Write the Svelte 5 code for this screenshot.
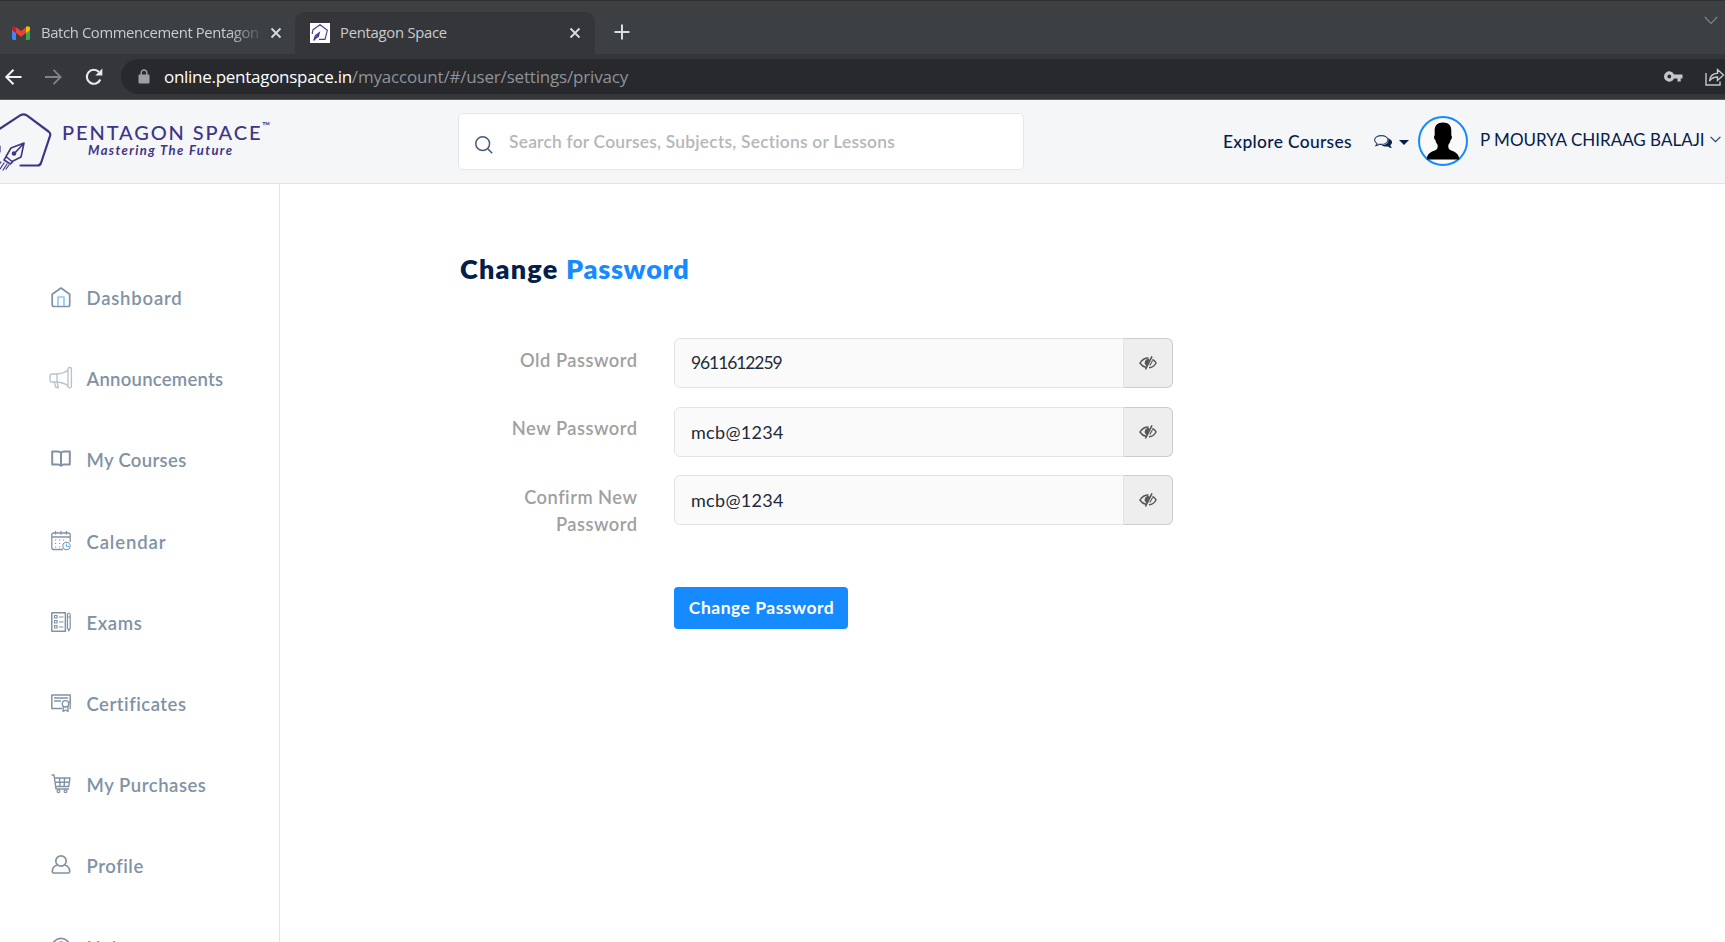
<script>
  const items = [
    ['home', 'Dashboard', 0.8], ['horn', 'Announcements', 0.26], ['book', 'My Courses', 0.33], ['cal', 'Calendar', 0.89],
    ['exam', 'Exams', 0.63], ['cert', 'Certificates', 0.51], ['cart', 'My Purchases', 0.53], ['user', 'Profile', 0.55], ['help', 'Help', 0.8]
  ];
  const fields = [
    { label: 'Old Password', value: '9611612259', digits: true },
    { label: 'New Password', value: 'mcb@1234' },
    { label: 'Confirm New Password', value: 'mcb@1234' }
  ];
</script>

<div class="screen">
  <div class="tabs">
    <div class="tab one">
      <svg class="gm" width="18" height="14" viewBox="0 0 18 14"><path d="M0 2v10.6Q0 14 1.4 14H4V4z" fill="#4285f4"/><path d="M14 4v10h2.600Q18 14 18 12.600V2z" fill="#34a853"/><path d="M14 1l0 6 4-3V2Q17.500-.8 14.500 .600z" fill="#fbbc04"/><path d="M4 1.200v5.800l5 3.700 5-3.700V1.200L9 5z" fill="#ea4335"/><path d="M0 2v2.200l4 3V1.200Q.6-1.200 0 2z" fill="#c5221f"/></svg>
      <span class="tt fade">Batch Commencement Pentagon</span>
      <svg class="x" width="12" height="12" viewBox="0 0 12 12"><path d="M1.500 1.500l9 9M10.500 1.500l-9 9"/></svg>
    </div>
    <div class="tab two">
      <span class="fav"><svg width="20" height="20" viewBox="0 0 60 60" fill="none" stroke="#4a3d96" stroke-width="3.500"><path d="M7 28L9 20 30 5 52 22 45 49H27M7 28v5M11 52l5-14 12-9-3 12-8 5-6 7M14 49l12-17"/></svg></span>
      <span class="tt">Pentagon Space</span>
      <svg class="x" width="12" height="12" viewBox="0 0 12 12"><path d="M1.500 1.500l9 9M10.500 1.500l-9 9"/></svg>
    </div>
    <svg class="plus" width="16" height="16" viewBox="0 0 16 16"><path d="M8 .5v15M.5 8h15"/></svg>
    <svg class="down" width="14" height="9" viewBox="0 0 14 9"><path d="M.8 .8L7 7.500 13.200 .8"/></svg>
  </div>
  <div class="bar">
    <svg class="back" width="17" height="16" viewBox="0 0 17 16"><path d="M16.500 8H1.500M8.500 .8L1.300 8l7.200 7.200"/></svg>
    <svg class="fwd" width="17" height="16" viewBox="0 0 17 16"><path d="M0 8h15.500M8.500 .8L15.700 8l-7.200 7.200"/></svg>
    <svg class="rel" width="18" height="18" viewBox="0 0 18 18"><path d="M15.300 11.500A7 7 0 1 1 14 4" fill="none" stroke="#e8eaed" stroke-width="2.100"/><path d="M17.300 .6v7h-7z" fill="#e8eaed"/></svg>
    <div class="omni">
      <svg class="lock" width="12" height="15" viewBox="0 0 12 15"><rect x=".5" y="5.500" width="11" height="9" rx="1" fill="#9aa0a6"/><path d="M3.200 6V3.800a2.800 2.800 0 0 1 5.600 0V6" fill="none" stroke="#9aa0a6" stroke-width="1.400"/></svg>
      <span class="url"><b>online.pentagonspace.in</b><span>/myaccount/#/user/settings/privacy</span></span>
      <svg class="key" width="19" height="11" viewBox="0 0 19 11"><path fill="#c4c7c9" fill-rule="evenodd" d="M10 3.500A5.200 5.200 0 1 0 10 7.500h3.500V10.500h3.200V7.500H18.500V3.500zM5.300 3.600a1.900 1.900 0 1 1 0 3.800 1.900 1.900 0 0 1 0-3.800z"/></svg>
      <svg class="share" width="20" height="18" viewBox="0 0 20 18" fill="none" stroke="#c4c7c9" stroke-width="1.400"><path d="M1 5v12h14v-3.500"/><path d="M4.500 13c.5-5 3.500-7.500 8-7.700V1.500l6 5.500-6 5.500V9c-3.500 0-6 1-8 4z"/></svg>
    </div>
  </div>

  <header>
    <svg class="mark" width="52" height="58" viewBox="0 0 52 58" fill="none" stroke="#3f3585" stroke-width="2.200" stroke-linecap="round" stroke-linejoin="round"><path d="M-2 17L20.500 2.200Q23.500 .5 26.500 2.200L48.500 18.500Q51 20.500 50 23L41 50Q40 52.500 37.500 52.500H20.500"/><path stroke-width="1.600" d="M24 30L11 35 6 43.500 12 48.500 21 44zM24 30L14 41M6 44l-2 3 6.500 4 2-2"/><circle cx="14" cy="40.500" r="1.200"/><path stroke-width="1.200" d="M1 49l-3 4M4 50l-4 6M7 51l-4 6M9 52l-3 4M0 33v6"/></svg>
    <div class="brand"><div class="b1"><span>PENTAGON SPACE</span><sup>™</sup></div><div class="b2">Mastering The Future</div></div>
    <div class="search">
      <svg width="18" height="18" viewBox="0 0 18 18" fill="none" stroke="#42597a" stroke-width="1.500"><circle cx="7.700" cy="7.700" r="6.900"/><path d="M12.700 12.700l4.500 4.500"/></svg>
      <span class="ph">Search for Courses, Subjects, Sections or Lessons</span>
    </div>
    <span class="exp">Explore Courses</span>
    <svg class="chat" width="19" height="14" viewBox="0 0 19 14"><path d="M14 3.300c4.500 1.700 5.200 4.700 2.400 7 .1 1 .7 1.700 1.600 2.600-1.700.2-3-.6-4-1.400-2.600.4-5-.2-6.500-1.500 5 .3 8-2.400 6.500-6.700z" fill="#0b2447"/><path d="M7.300 .6c3.800 0 6.700 2 6.700 4.400s-2.900 4.400-6.700 4.400c-.7 0-1.400 0-2-.2-1 .8-2.100 1.300-3.400 1.400.6-.7 1-1.400 1.100-2.100C1.500 7.700.6 6.400.6 5 .6 2.600 3.500.6 7.300 .6z" fill="#f4f6f8" stroke="#2a4162" stroke-width="1.100"/></svg>
    <svg class="caret" width="10" height="5" viewBox="0 0 10 5"><path d="M0 0h10L5 5z" fill="#04204a"/></svg>
    <svg class="ava" width="50" height="50" viewBox="0 0 50 50"><circle cx="25" cy="25" r="24" fill="#fafafa" stroke="#168bff" stroke-width="2"/><path d="M25 6.500c5.500 0 8.700 3 8.300 9v4c1 .2.900 3.500-.7 4.500-.5 2.500-1.400 3.800-2.300 5 0 3 .2 4 2 5 4 2 8.500 2.500 9 9.500H8.700c.5-7 5-7.500 9-9.500 1.800-1 2-2 2-5-.9-1.200-1.800-2.500-2.300-5-1.600-1-1.700-4.300-.7-4.500v-4c-.4-6 2.800-9 8.300-9z"/></svg>
    <span class="name">P MOURYA CHIRAAG BALAJI</span>
    <svg class="chev" width="11" height="7" viewBox="0 0 11 7"><path d="M.6 .8l4.900 4.900L10.400 .8" fill="none" stroke="#2c4464" stroke-width="1.200"/></svg>
  </header>

  <div class="body">
    <aside>
      {#each items as [ic, label, ls]}
        <div class="item">
          <svg width="24" height="22" viewBox="0 0 24 22" fill="none" stroke="#8192a6" stroke-width="1.700" stroke-linejoin="round">
            {#if ic === 'home'}<path d="M3.200 8.200L12 2l8.700 6.200v10.600q0 1.700-1.700 1.700H4.900q-1.700 0-1.700-1.700z"/><path d="M9 20v-9h6v9" stroke="#8cc8ff"/>
            {:else if ic === 'horn'}<g stroke="#b9c1cb" stroke-width="1.300"><path d="M3 7h5v8H3Q1 15 1 13V9q0-2 2-2zM8 7q7-.5 11-4v16q-4-3.500-11-4M19 1.500q0-1 1.700-1t1.700 1v18.300q0 1-1.700 1t-1.700-1zM5 15l2 5.500h2.500L8 15"/></g>
            {:else if ic === 'book'}<path stroke-width="2" d="M12 5q-1-1.500-3-1.500H3.200v13H9q2 0 3 1.300 1-1.300 3-1.300h5.800v-13H15q-2 0-3 1.500zM12 5v12"/>
            {:else if ic === 'cal'}<path stroke-width="1.300" d="M14 19.500H4.600q-1.800 0-1.800-1.700V4.500Q2.800 3 4.600 3h14.800Q21.200 3 21.200 4.500V12M3 7h18M6.500 1v3.500M12 1v3.500M17.500 1v3.500"/><path stroke-dasharray="1.200 2.800" stroke-width="1.200" d="M6 10h12M6 13.500h9M6 17h7"/><circle cx="17.500" cy="16" r="3.700" stroke-width="1.100"/><path stroke="#6bb5ff" stroke-width="1" d="M17.500 13.500V16.500h2.500"/>
            {:else if ic === 'exam'}<path stroke-width="1.500" d="M2.800 1.700h13.600v18.600H2.800z"/><path stroke-width="1.200" d="M5.500 4.500h2.500v2.500H5.500zM5.500 9.500h2.500v2.500H5.500zM5.500 14.500h2.500v2.500H5.500zM10 6h4.500M10 11h4.500M10 16h4.500M18.500 4q0-2 1.300-2t1.400 2v13l-1.400 3-1.300-3zM18.500 6h2.700"/>
            {:else if ic === 'cert'}<path stroke-width="1.500" d="M13 16.500H2.800V3h18.400v8"/><path stroke-width="1.300" d="M5 6h14M5 9h7M21.200 8v9"/><circle cx="16.500" cy="11.800" r="3.200" stroke-width="1.400"/><path stroke-width="1.400" d="M14.200 14.500v5l2.300-1.500 2.500 1.500v-5"/>
            {:else if ic === 'cart'}<path stroke-width="1.400" d="M2.500 2H5l2 14h13M5.500 5H21l-1.300 8.500H6.700M6 9.200h14.500M10.500 5l.5 8.500M15.500 5l-.3 8.500"/><circle cx="9.500" cy="18.300" r="1.400" stroke-width="1.200"/><circle cx="16.500" cy="18.300" r="1.400" stroke-width="1.200"/>
            {:else if ic === 'user'}<circle cx="12" cy="7" r="5.200"/><path d="M8.300 11Q3.300 12.500 3.300 17.500 3.300 19 4.800 19h14.400q1.500 0 1.500-1.500 0-5-5-6.500"/>
            {:else}<circle cx="12" cy="11" r="8.700"/><path d="M9 9q0-3 3-3t3 3-3 4"/>{/if}
          </svg>
          <span class="lbl" style="letter-spacing: {ls}px">{label}</span>
        </div>
      {/each}
    </aside>
    <main>
      <h1><span class="dark">Change</span><span class="blue">Password</span></h1>
      <div class="form">
        {#each fields as f}
          <div class="row">
            <div class="label">{f.label}</div>
            <div class="field">
              <div class="in" class:digits={f.digits}>{f.value}</div>
              <div class="eye"><svg width="18" height="14" viewBox="0 0 18 14" fill="none" stroke="#555" stroke-width="1.400"><path d="M7 11.300Q3.200 10.500 .9 7 4 2 9.500 2M13.500 3.300Q16 4.700 17.100 7 14.500 11.500 10 11.700"/><path d="M13 .3L6.500 13.500" stroke-width="1.600"/><path d="M10 3.200q-4 .3-4 3.700 .3 2 1.700 2.800z" fill="#555" stroke-width="1"/><path stroke-width="1.100" d="M13.600 4.500l-2.800 5"/></svg></div>
            </div>
          </div>
        {/each}
        <button>Change Password</button>
      </div>
    </main>
  </div>
</div>

<style>
  :global(body) { margin: 0; overflow: hidden; }
  * { box-sizing: border-box; }
  .screen { width: 1725px; height: 942px; overflow: hidden; display: flex; flex-direction: column; font-family: Lato, sans-serif; background: #fff; color: #04204a; }
  svg { display: block; flex: none; overflow: visible; }
  span { white-space: nowrap; }
  .tabs { height: 54px; flex: none; display: flex; background: #3c4043; border-top: 1px solid #302e2f; }
  .tabs, .bar { font-family: "Open Sans", sans-serif; }
  .tab { display: flex; align-items: center; margin-top: 11px; height: 42px; font-size: 14.8px; letter-spacing: -0.25px; color: #c9ccd0; }
  .one { width: 295px; padding-left: 12px; background: #3c4043; border-radius: 0 0 9px 0; }
  .two { width: 300px; padding-left: 15px; background: #35363a; border-radius: 9px 9px 0 0; }
  .tt { display: block; margin: -2px 0 0 11px; }
  .fade { width: 219px; letter-spacing: -0.36px; -webkit-mask-image: linear-gradient(90deg, #000 86%, rgba(0, 0, 0, .15)); }
  .one .x { margin: -1px 0 0 10px; }
  .two .x { margin: -1px 0 0 122px; }
  .x path { stroke: #dadce0; stroke-width: 1.8; fill: none; }
  .fav { width: 20px; height: 20px; background: #fff; }
  .two .tt { margin-left: 10px; width: 107px; }
  .plus { margin: 23px 0 0 19px; }
  .plus path { stroke: #dadce0; stroke-width: 2; }
  .down { margin: 15px 7px 0 auto; }
  .down path { stroke: #8a8d90; fill: none; stroke-width: 1.1; }
  .bar { height: 46px; flex: none; background: #35363a; border-bottom: 1px solid #5b5a5e; display: flex; align-items: center; padding-left: 5px; }
  .back path { stroke: #f1f3f4; fill: none; stroke-width: 2; }
  .fwd { margin-left: 23px; }
  .fwd path { stroke: #808387; fill: none; stroke-width: 1.8; }
  .rel { margin-left: 23px; }
  .omni { margin-left: 18px; flex: 1; height: 35px; background: #28292d; border-radius: 18px 0 0 18px; display: flex; align-items: center; padding-left: 17px; }
  .url { margin: 0 0 0 14px; font-size: 17px; color: #8f9398; display: flex; letter-spacing: -0.18px; }
  .url b { font-weight: 400; color: #fff; letter-spacing: -0.28px; }
  .key { margin-left: auto; }
  .share { margin-left: 22px; }
  header { height: 84px; flex: none; background: #f4f6f8; border-bottom: 1px solid #e2e5e9; display: flex; align-items: center; }
  .brand { margin: -3px 0 0 10px; width: 396px; color: #3f3585; }
  .b1 { font-size: 20px; line-height: 20px; display: flex; letter-spacing: 1.9px; font-weight: 500; }
  .b1 sup { font-size: 11px; line-height: 10px; letter-spacing: 0; margin-top: -1px; }
  .b2 { font-size: 13px; line-height: 17px; margin-left: 26px; font-style: italic; font-weight: 700; letter-spacing: 1.4px; white-space: nowrap; }
  .search { width: 566px; height: 57px; border: 1px solid #e5e7ea; border-radius: 5px; background: #fff; display: flex; align-items: center; padding-left: 16px; margin-bottom: 1px; }
  .search svg { margin-top: 7px; }
  .ph { margin: 1px 0 0 16px; font-size: 17.4px; color: #b5b7ba; font-weight: 600; letter-spacing: 0.22px; }
  .exp { font-size: 17.4px; width: 151px; margin-left: 199px; letter-spacing: 0.33px; font-weight: 500; }
  .caret { margin: 2px 0 0 6px; }
  .ava { margin: -2px 0 0 9px; }
  .name { margin: -5px 0 0 12px; font-size: 17px; width: 230px; letter-spacing: 0; }
  .chev { margin-top: -5px; }
  .body { flex: 1; display: flex; min-height: 0; margin-top: -1px; }
  aside { width: 280px; flex: none; border-right: 1px solid #e2e5e8; margin-top: 1px; padding-top: 74px; overflow: hidden; }
  .item { height: 81.2px; display: flex; align-items: flex-start; padding: 28px 0 0 49px; }
  .lbl { margin-left: 13.5px; font-size: 18.5px; line-height: 24px; color: #8192a6; font-weight: 600; }
  main { padding: 68px 0 0 181px; }
  h1 { margin: 0; font-size: 27px; line-height: 36px; display: flex; font-weight: 800; }
  .dark { width: 106px; margin-left: -1px; letter-spacing: 1.2px; }
  .blue { color: #168bff; letter-spacing: 0.7px; }
  .form { margin: 51px 0 0 40px; width: 672px; }
  .row { display: flex; height: 68.5px; justify-content: space-between; }
  .label { width: 136.5px; text-align: right; font-size: 18.3px; letter-spacing: 0.5px; line-height: 27px; padding-top: 8.5px; color: #a0a0a0; font-weight: 600; }
  .field { width: 499px; height: 50px; display: flex; }
  .in { flex: 1; background: #fafafa; border: 1px solid #e4e4e6; border-radius: 6px 0 0 6px; padding-left: 16px; font-size: 18px; line-height: 48px; color: #222b3c; letter-spacing: 0.3px; }
  .digits { letter-spacing: -1.1px; font-size: 17.5px; }
  .eye { width: 49px; background: #eee; border: 1px solid #ccc; border-left: 0; border-radius: 0 6px 6px 0; display: flex; align-items: center; justify-content: center; }
  button { display: block; margin: 43px 0 0 173px; width: 174px; height: 42px; border: 0; border-radius: 4px; background: #168bff; color: #fff; font: 700 17.5px Lato, sans-serif; letter-spacing: 0.5px; padding: 0 0 0 1px; white-space: nowrap; }
</style>
